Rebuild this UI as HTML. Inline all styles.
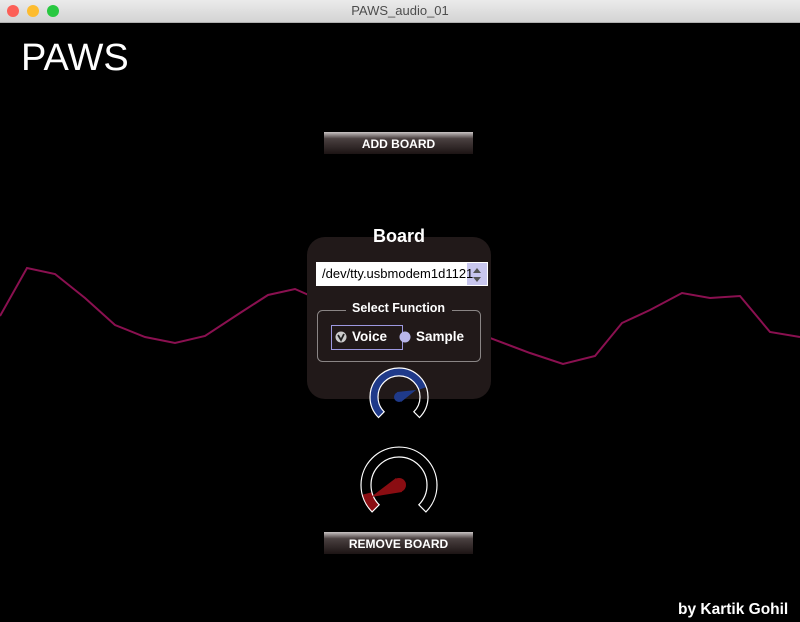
<!DOCTYPE html>
<html><head><style>
body{margin:0;width:800px;height:622px;background:#000;overflow:hidden;font-family:"Liberation Sans",sans-serif;position:relative}
.tb{position:absolute;left:0;top:0;width:800px;height:22px;background:linear-gradient(#ebebeb,#d3d3d3);border-bottom:1px solid #b0b0b0;text-align:center;font:13px/22px "Liberation Sans",sans-serif;color:#4d4d4d}
.d{position:absolute;top:5px;width:12px;height:12px;border-radius:50%}
.btn{position:absolute;left:324px;width:149px;height:22px;background:linear-gradient(#c9c4c4 0,#4a4040 30%,#1c1414 100%);color:#fff;font-size:12px;font-weight:bold;text-align:center;line-height:24px}
.t{position:absolute;color:#fff;white-space:nowrap}
</style></head><body>
<div class="tb">PAWS_audio_01
<div class="d" style="left:7px;background:#fc5f57"></div><div class="d" style="left:27px;background:#fdbc2e"></div><div class="d" style="left:47px;background:#28c840"></div></div>
<div class="t" style="left:21px;top:37px;font-size:38px">PAWS</div>
<div class="btn" style="top:132px">ADD BOARD</div>
<svg style="position:absolute;left:0;top:0" width="800" height="622">
<polyline fill="none" stroke="#8a1050" stroke-width="2" points="0,316 27,268 55,274 85,298 115,325 145,337 175,343 205,336 240,313 268,295 295,289 320,300 490,338 530,353 563,364 595,356 622,323 650,310 682,293 710,298 740,296 770,332 800,337"/>
<rect x="307" y="237" width="184" height="162" rx="18" fill="#211919"/>
<path d="M378.5,417.5 A29 29 0 1 1 426.3,387.1 L418.7,389.8 A21 21 0 1 0 384.2,411.8Z" fill="#1f3a8a"/>
<path d="M378.5,417.5 A29 29 0 1 1 419.5,417.5 L413.8,411.8 A21 21 0 1 0 384.2,411.8Z" fill="none" stroke="#fff" stroke-width="1.2"/>
<circle cx="399" cy="397" r="5" fill="#1f3a8a"/><polygon points="397,392 416,390 401,402" fill="#1f3a8a"/>
<path d="M372.1,511.9 A38 38 0 0 1 362.3,494.8 L371.9,492.3 A28 28 0 0 0 379.2,504.8Z" fill="#8a0d12"/>
<path d="M372.1,511.9 A38 38 0 1 1 425.9,511.9 L418.8,504.8 A28 28 0 1 0 379.2,504.8Z" fill="none" stroke="#fff" stroke-width="1.2"/>
<circle cx="399" cy="485" r="7" fill="#8a0d12"/><polygon points="396,478 371,497 402,492" fill="#8a0d12"/>
<rect x="317.5" y="310.5" width="163" height="51" rx="5" fill="none" stroke="#8a8585"/>
<rect x="346" y="302" width="106" height="14" fill="#211919"/>
<rect x="331.5" y="325.5" width="71" height="24" fill="none" stroke="#9d98e0"/>
<circle cx="341" cy="337" r="5.5" fill="#ccc"/><path d="M338,335 L341,340 L344,334" stroke="#222" stroke-width="1.8" fill="none"/>
<circle cx="405" cy="337" r="5.5" fill="#b8b5ea"/>
<rect x="316" y="262" width="172" height="24" fill="#fff"/>
<rect x="467" y="263" width="20" height="22" fill="#c8c6ee"/>
<path d="M473,273 L477,268 L481,273Z M473,277 L477,282 L481,277Z" fill="#555"/>
</svg>
<div class="t" style="left:373px;top:226px;font-size:18px;font-weight:bold">Board</div>
<div class="t" style="left:322px;top:266px;font-size:13px;color:#000">/dev/tty.usbmodem1d1121</div>
<div class="t" style="left:352px;top:301px;font-size:12.5px;font-weight:bold">Select Function</div>
<div class="t" style="left:352px;top:329px;font-size:13.5px;font-weight:bold">Voice</div>
<div class="t" style="left:416px;top:329px;font-size:13.5px;font-weight:bold">Sample</div>
<div class="btn" style="top:532px">REMOVE BOARD</div>
<div class="t" style="left:678px;top:601px;font-size:15.5px;font-weight:bold">by Kartik Gohil</div>
</body></html>
